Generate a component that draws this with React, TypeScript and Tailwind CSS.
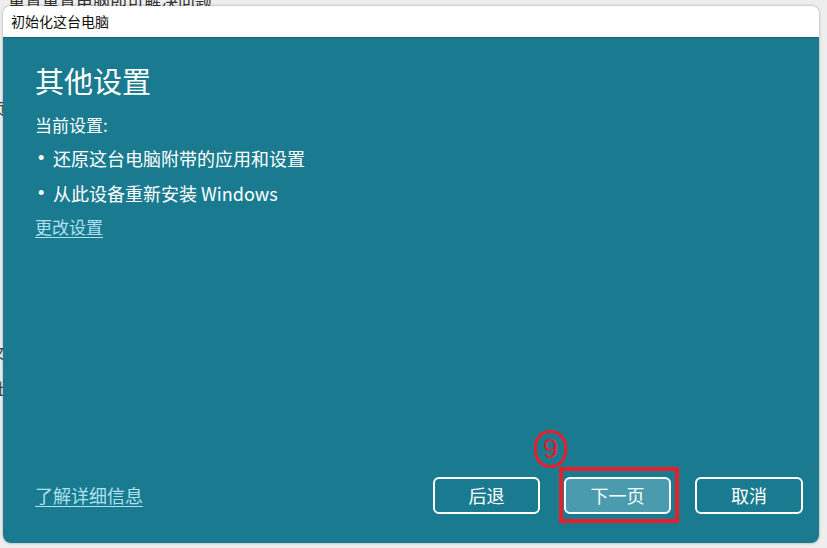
import React from 'react';

const font = '[font-family:"Noto_Sans_CJK_SC","Noto_Sans",sans-serif]';

const Bullet: React.FC = () => (
  <span className="w-[18px] pl-[3px] [font-family:'Liberation_Sans',sans-serif]">•</span>
);

const App: React.FC = () => {
  return (
    <div className={`relative w-[827px] h-[548px] overflow-hidden bg-[#eeeeee] ${font}`}>
      {/* page behind the dialog */}
      <div className="absolute left-[8px] top-[-12px] text-[17px] text-[#333]">重置重置电脑即可解决问题</div>
      <div className="absolute left-[-10px] top-[96px] text-[16px] text-[#444]">页</div>
      <div className="absolute left-[-10px] top-[340px] text-[16px] text-[#444]">文</div>
      <div className="absolute left-[-10px] top-[376px] text-[16px] text-[#444]">吐</div>

      <div className="relative ml-[3px] mt-[6px] w-[816px] h-[537px] rounded-[8px] overflow-hidden flex flex-col shadow-[0_0_3px_rgba(0,0,0,0.35)]">
        {/* title bar */}
        <div className="h-[32px] bg-white flex items-center pl-[8px] text-[14px] text-[#111] border-b border-[#15687a]">
          初始化这台电脑
        </div>

        {/* body */}
        <div className="flex-1 flex flex-col bg-[#1a7b90] text-white">
          <div className="flex-1 pl-[32px] pt-[22px]">
            <h1 className="text-[29px] leading-[40px] font-normal">其他设置</h1>
            <p className="mt-[13px] text-[17px] leading-[24px]">当前设置:</p>
            <ul className="mt-[6px] text-[18px]">
              <li className="flex items-center h-[30px]">
                <Bullet />
                还原这台电脑附带的应用和设置
              </li>
              <li className="flex items-center h-[30px] mt-[5px]">
                <Bullet />
                从此设备重新安装 Windows
              </li>
            </ul>
            <a className="inline-block mt-[4px] text-[17px] leading-[30px] text-[#aee0ef] underline underline-offset-[3px]">
              更改设置
            </a>
          </div>

          {/* footer */}
          <div className="flex items-center justify-between pl-[32px] pr-[16px] pb-[29px]">
            <a className="text-[18px] text-[#aee0ef] underline underline-offset-[3px]">了解详细信息</a>
            <div className="flex gap-[24px]">
              <button className="w-[107px] h-[37px] rounded-[6px] border-2 border-white text-[18px] text-white">后退</button>
              <div className="relative">
                <button className="w-[107px] h-[37px] rounded-[6px] border-2 border-white bg-[#4a9bad] text-[18px] text-white">下一页</button>
                <div className="absolute left-[-5px] top-[-10px] w-[120px] h-[56px] border-[4px] border-[#e5202b] pointer-events-none" />
                <div className="absolute left-[-30px] top-[-47px] w-[33px] h-[38px] rounded-full border-[3px] border-[#e5202b] flex items-center justify-center text-[#e5202b] text-[27px] leading-none [font-family:'Liberation_Sans',Arial,sans-serif]">
                  9
                </div>
              </div>
              <button className="w-[108px] h-[37px] rounded-[6px] border-2 border-white text-[18px] text-white">取消</button>
            </div>
          </div>
        </div>
      </div>
    </div>
  );
};

export default App;
